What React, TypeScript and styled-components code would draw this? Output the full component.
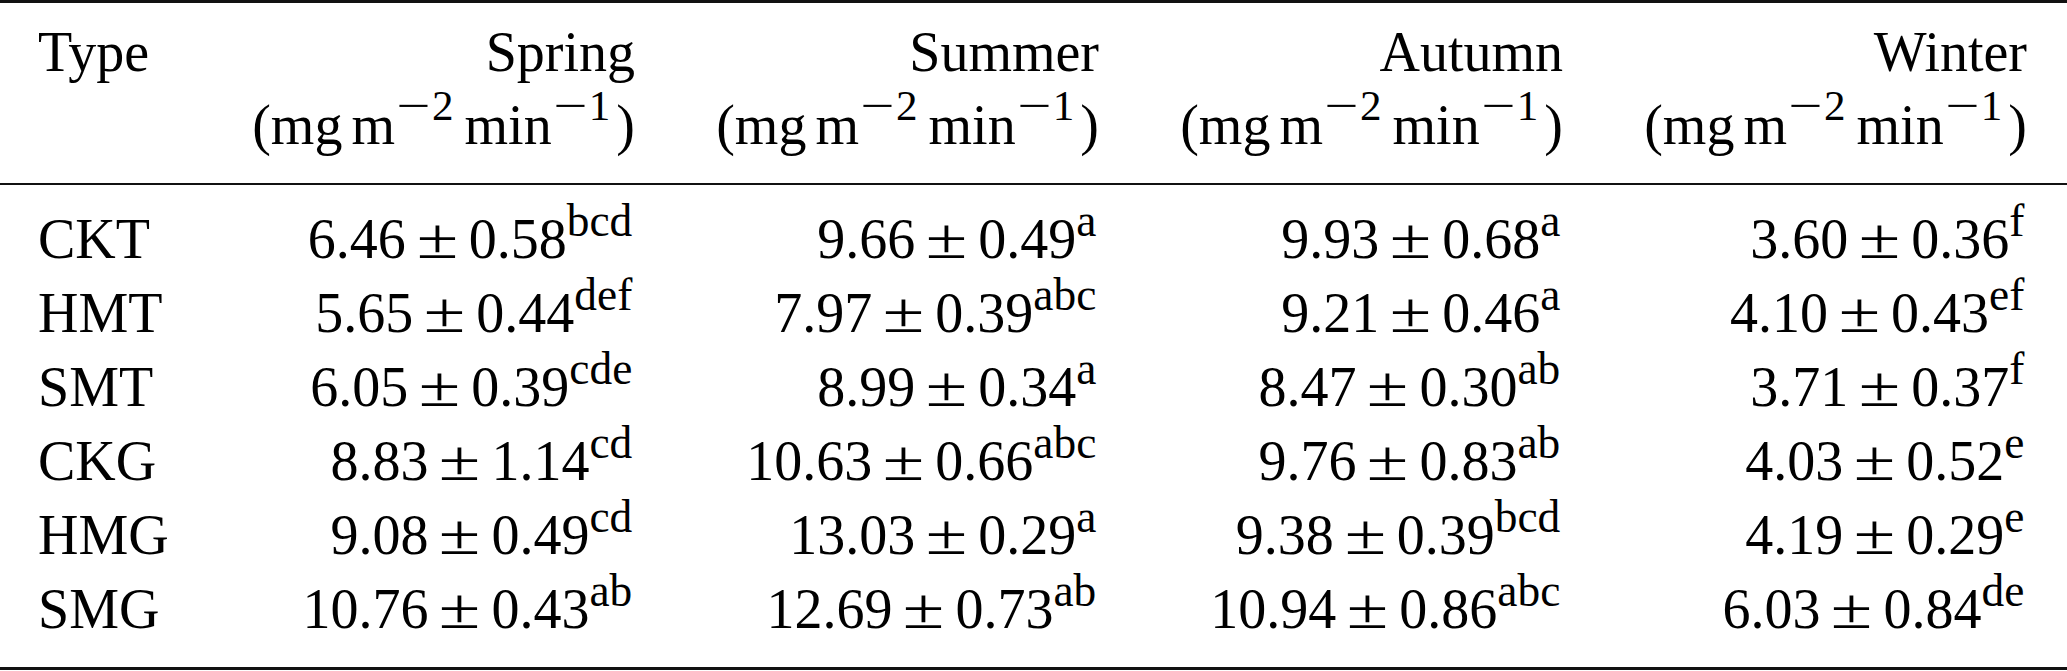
import React from "react";
import styled, { createGlobalStyle } from "styled-components";

const GlobalStyle = createGlobalStyle`
  html, body {
    margin: 0;
    padding: 0;
    background: #ffffff;
  }
  body {
    font-family: "Liberation Serif", "Times New Roman", serif;
    color: #000000;
  }
`;

const Table = styled.div`
  width: 2067px;
  box-sizing: border-box;
  border-top: 3px solid #111;
  border-bottom: 3px solid #111;
  font-family: "Liberation Serif", "Times New Roman", serif;
  font-size: 56px;
  color: #000;
`;

const Grid = styled.div<{ $head?: boolean }>`
  display: grid;
  grid-template-columns: 133px repeat(4, 464px);
  padding: ${(p) => (p.$head ? "13px 40px 21px 38px" : "17px 40px 21px 38px")};
  line-height: ${(p) => (p.$head ? "73px" : "74px")};
  border-bottom: ${(p) => (p.$head ? "2px solid #111" : "none")};
`;

const Cell = styled.div<{ $align?: "left" | "right" }>`
  text-align: ${(p) => (p.$align === "left" ? "left" : "right")};
  white-space: nowrap;
`;

const Line = styled.div`
  display: block;
`;

const Sup = styled.span<{ $size: number; $raise: number; $after?: number }>`
  font-size: ${(p) => p.$size}em;
  line-height: 0;
  vertical-align: ${(p) => p.$raise}px;
  margin-right: ${(p) => p.$after ?? 0.06}em;
`;

const MathMinus = styled.span`
  display: inline-block;
  width: 0.86em;
  text-align: center;
  transform: scaleX(1.4);
`;

const Pm = styled.span`
  display: inline-block;
  width: 63px;
  text-align: center;
  transform: scaleX(1.35);
`;

const Space = styled.span<{ $w: number }>`
  display: inline-block;
  width: ${(p) => p.$w}em;
`;

type Value = [string, string, string];
type Row = [string, Value, Value, Value, Value];

const seasons = ["Spring", "Summer", "Autumn", "Winter"];

const rows: Row[] = [
  ["CKT", ["6.46", "0.58", "bcd"], ["9.66", "0.49", "a"], ["9.93", "0.68", "a"], ["3.60", "0.36", "f"]],
  ["HMT", ["5.65", "0.44", "def"], ["7.97", "0.39", "abc"], ["9.21", "0.46", "a"], ["4.10", "0.43", "ef"]],
  ["SMT", ["6.05", "0.39", "cde"], ["8.99", "0.34", "a"], ["8.47", "0.30", "ab"], ["3.71", "0.37", "f"]],
  ["CKG", ["8.83", "1.14", "cd"], ["10.63", "0.66", "abc"], ["9.76", "0.83", "ab"], ["4.03", "0.52", "e"]],
  ["HMG", ["9.08", "0.49", "cd"], ["13.03", "0.29", "a"], ["9.38", "0.39", "bcd"], ["4.19", "0.29", "e"]],
  ["SMG", ["10.76", "0.43", "ab"], ["12.69", "0.73", "ab"], ["10.94", "0.86", "abc"], ["6.03", "0.84", "de"]],
];

const Unit: React.FC = () => (
  <Line>
    (mg
    <Space $w={0.16} />m
    <Sup $size={0.77} $raise={24} $after={0.06}>
      <MathMinus>−</MathMinus>2
    </Sup>
    <Space $w={0.15} />
    min
    <Sup $size={0.77} $raise={24} $after={0.14}>
      <MathMinus>−</MathMinus>1
    </Sup>
    )
  </Line>
);

const ValueCell: React.FC<{ v: Value }> = ({ v }) => (
  <Cell>
    {v[0]}
    <Pm>±</Pm>
    {v[1]}
    <Sup $size={0.81} $raise={22}>
      {v[2]}
    </Sup>
  </Cell>
);

export default function App() {
  return (
    <>
      <GlobalStyle />
      <Table>
        <Grid $head>
          <Cell $align="left">
            <Line>Type</Line>
          </Cell>
          {seasons.map((s) => (
            <Cell key={s}>
              <Line>{s}</Line>
              <Unit />
            </Cell>
          ))}
        </Grid>
        <Grid>
          {rows.map((r) => (
            <React.Fragment key={r[0]}>
              <Cell $align="left">{r[0]}</Cell>
              <ValueCell v={r[1]} />
              <ValueCell v={r[2]} />
              <ValueCell v={r[3]} />
              <ValueCell v={r[4]} />
            </React.Fragment>
          ))}
        </Grid>
      </Table>
    </>
  );
}
